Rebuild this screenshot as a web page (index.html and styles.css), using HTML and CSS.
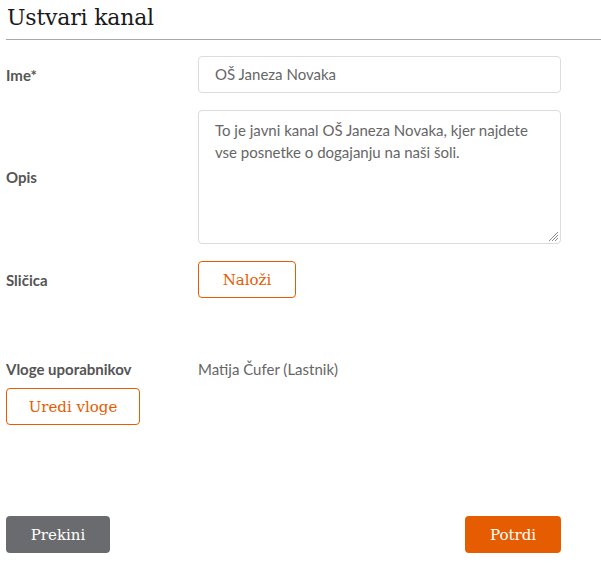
FILE: index.html
```html
<!DOCTYPE html>
<html lang="sl">
<head>
<meta charset="utf-8">
<title>Ustvari kanal</title>
<link rel="stylesheet" href="styles.css">
</head>
<body>
<div class="page">
  <h1 class="title">Ustvari kanal</h1>
  <div class="form">
    <div class="row row-ime">
      <label class="label">Ime*</label>
      <div class="field input">OŠ Janeza Novaka</div>
    </div>
    <div class="row row-opis">
      <label class="label">Opis</label>
      <div class="field textarea">To je javni kanal OŠ Janeza Novaka, kjer najdete vse posnetke o dogajanju na naši šoli.
        <svg class="grip" width="12" height="12" viewBox="0 0 12 12"><path d="M11 2 L2 11 M11 5 L5 11 M11 8 L8 11" stroke="#888" stroke-width="1" fill="none"/></svg>
      </div>
    </div>
    <div class="row row-slicica">
      <label class="label">Sličica</label>
      <div class="field-plain"><button class="btn btn-outline btn-nalozi">Naloži</button></div>
    </div>
    <div class="row row-vloge">
      <label class="label">Vloge uporabnikov</label>
      <div class="value">Matija Čufer (Lastnik)</div>
    </div>
    <div class="uredi-wrap"><button class="btn btn-outline btn-uredi">Uredi vloge</button></div>
  </div>
  <div class="actions">
    <button class="btn btn-gray">Prekini</button>
    <button class="btn btn-orange">Potrdi</button>
  </div>
</div>
</body>
</html>
```
FILE: styles.css
```css
* { box-sizing: border-box; }
html, body { margin: 0; padding: 0; background: #fff; }
body { font-family: "Source Sans Pro", Lato, "Liberation Sans", sans-serif; color: #666; }
.page { padding-left: 6px; width: 601px; }
.title {
  margin: 0;
  padding: 5px 0 0 1px;
  height: 40px;
  font-family: "DejaVu Serif", serif;
  font-weight: normal;
  font-size: 22px;
  color: #1a1a1a;
  border-bottom: 1px solid #a8a8a8;
  letter-spacing: -0.2px;
}
.form { display: flex; flex-direction: column; padding-top: 16px; }
.row { display: grid; grid-template-columns: 192px 363px; align-items: center; }
.row + .row { margin-top: 17px; }
.label { font-weight: bold; font-size: 15px; color: #555; }
.field {
  border: 1px solid #dcdcdc;
  border-radius: 4px;
  font-size: 15px;
  color: #666;
  padding: 0 16px;
}
.input { height: 37px; line-height: 35px; }
.textarea { height: 134px; padding-top: 8px; line-height: 22px; position: relative; }
.grip { position: absolute; right: 1px; bottom: 1px; }
.btn {
  font-family: "DejaVu Serif", serif;
  font-size: 15px;
  height: 37px;
  border-radius: 4px;
  padding: 0;
  cursor: pointer;
}
.btn-outline { background: #fff; border: 1px solid #e65c00; color: #e65c00; }
.btn-nalozi { width: 98px; }
.row.row-vloge { margin-top: 62px; align-items: start; line-height: 18px; }
.value { font-size: 15px; color: #666; }
.uredi-wrap { margin-top: 10px; }
.btn-uredi { width: 134px; }
.actions { display: flex; justify-content: space-between; width: 555px; margin-top: 91px; }
.btn-gray { background: #6a6b6e; border: none; color: #fff; width: 104px; }
.btn-orange { background: #e65c00; border: none; color: #fff; width: 96px; }
```
